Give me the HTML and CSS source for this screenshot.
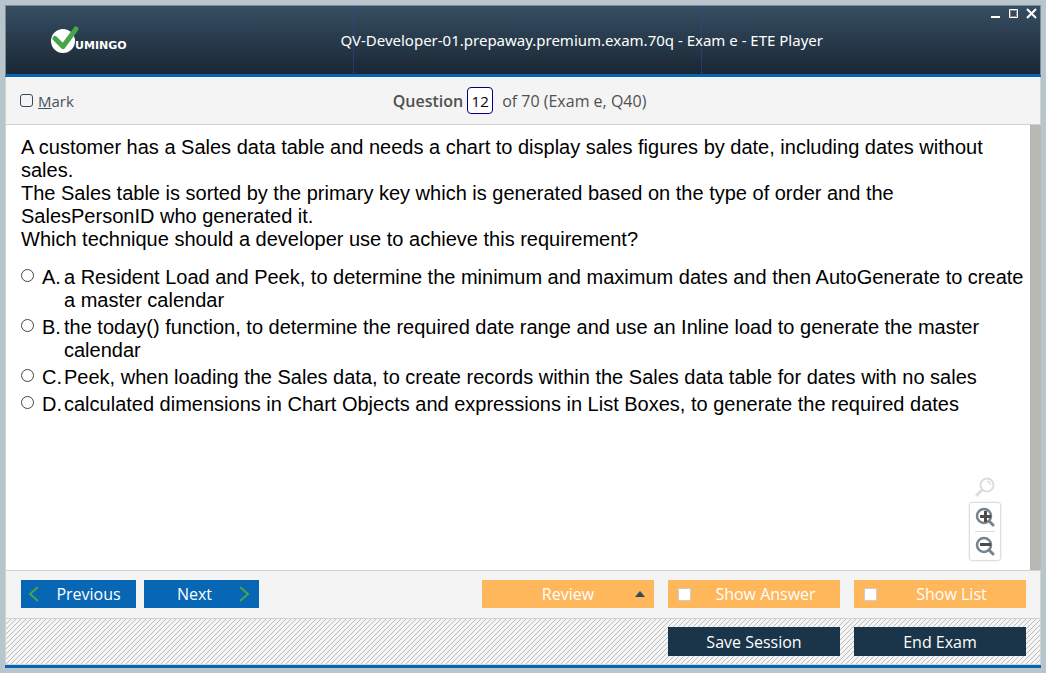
FILE: index.html
```html
<!DOCTYPE html>
<html lang="en">
<head>
<meta charset="utf-8">
<title>ETE Player</title>
<link rel="stylesheet" href="styles.css">
</head>
<body>
<div class="window">
  <header class="titlebar">
    <svg class="logo" width="84" height="28" viewBox="0 0 84 28" role="img" aria-label="Vumingo">
      <circle cx="12" cy="15" r="12" fill="#fff"/>
      <path d="M4 12.500L12 20.500L25 3" fill="none" stroke="#45a548" stroke-width="5" stroke-linecap="round" stroke-linejoin="round"/>
      <text class="logo-text" x="24" y="23">UMINGO</text>
    </svg>
    <h1 class="title">QV-Developer-01.prepaway.premium.exam.70q - Exam e - ETE Player</h1>
    <div class="controls">
      <button class="control" aria-label="Minimize"><svg width="11" height="11" viewBox="0 0 11 11"><path d="M1 8h9v2H1z" fill="#fff"/></svg></button>
      <button class="control" aria-label="Maximize"><svg width="11" height="11" viewBox="0 0 11 11"><path d="M1.500 1.500h8v8h-8z" fill="none" stroke="#fff"/><path d="M2.500 2.500h6v6h-6z" fill="none" stroke="#8d8580"/></svg></button>
      <button class="control" aria-label="Close"><svg width="11" height="11" viewBox="0 0 11 11"><path d="M1 1l9 9M10 1l-9 9" stroke="#fff" stroke-width="2"/></svg></button>
    </div>
  </header>
  <div class="infobar">
    <label class="mark"><input type="checkbox" class="mark-box"><span><u>M</u>ark</span></label>
    <div class="position">
      <label class="position-label" for="number">Question</label>
      <input class="number" id="number" type="text" value="12">
      <span>of 70 (Exam e, Q40)</span>
    </div>
  </div>
  <main class="content">
    <div class="question">
      <p>A customer has a Sales data table and needs a chart to display sales figures by date, including dates without sales.</p>
      <p>The Sales table is sorted by the primary key which is generated based on the type of order and the SalesPersonID who generated it.</p>
      <p>Which technique should a developer use to achieve this requirement?</p>
      <div class="answers">
        <label class="answer"><input type="radio" name="answer"><span>A.</span><span>a Resident Load and Peek, to determine the minimum and maximum dates and then AutoGenerate to create a master calendar</span></label>
        <label class="answer"><input type="radio" name="answer"><span>B.</span><span>the today() function, to determine the required date range and use an Inline load to generate the master calendar</span></label>
        <label class="answer"><input type="radio" name="answer"><span>C.</span><span>Peek, when loading the Sales data, to create records within the Sales data table for dates with no sales</span></label>
        <label class="answer"><input type="radio" name="answer"><span>D.</span><span>calculated dimensions in Chart Objects and expressions in List Boxes, to generate the required dates</span></label>
      </div>
    </div>
    <div class="zoom">
      <svg width="20" height="20" viewBox="0 0 20 20"><circle cx="12" cy="8" r="6.500" fill="none" stroke="#dcdcdc" stroke-width="2"/><path d="M12 4.500a3.500 3.500 0 0 1 3.500 3.500" fill="none" stroke="#dcdcdc" stroke-width="1.500"/><path d="M7 13l-5 5" stroke="#dcdcdc" stroke-width="3" stroke-linecap="round"/></svg>
      <div class="zoom-box">
        <button class="zoom-button" aria-label="Zoom in"><svg width="20" height="20" viewBox="0 0 20 20"><circle cx="9" cy="9" r="7" fill="none" stroke="#76838d" stroke-width="2.500"/><path d="M14 14l4 4" stroke="#76838d" stroke-width="3" stroke-linecap="round"/><path d="M5 9.500h11M10.500 4v11" stroke="#4c4c4c" stroke-width="3"/></svg></button>
        <button class="zoom-button" aria-label="Zoom out"><svg width="20" height="20" viewBox="0 0 20 20"><circle cx="9" cy="9" r="7" fill="none" stroke="#76838d" stroke-width="2.500"/><path d="M14 14l4 4" stroke="#76838d" stroke-width="3" stroke-linecap="round"/><path d="M5 8.500h11" stroke="#4c4c4c" stroke-width="3"/></svg></button>
      </div>
    </div>
  </main>
  <div class="toolbar">
    <button class="button nav"><svg width="12" height="18" viewBox="0 0 12 18"><path d="M10 2L2 9l8 7" fill="none" stroke="#45a548" stroke-width="2"/></svg><span>Previous</span></button>
    <button class="button nav next"><span>Next</span><svg width="12" height="18" viewBox="0 0 12 18"><path d="M2 2l8 7-8 7" fill="none" stroke="#45a548" stroke-width="2"/></svg></button>
    <button class="button wide review"><span>Review</span><svg width="10" height="6" viewBox="0 0 10 6"><path d="M0 6l5-6 5 6z" fill="#34495e"/></svg></button>
    <label class="button wide check"><input type="checkbox"><span>Show Answer</span></label>
    <label class="button wide check"><input type="checkbox"><span>Show List</span></label>
  </div>
  <footer class="footer">
    <button class="button wide dark">Save Session</button>
    <button class="button wide dark">End Exam</button>
  </footer>
</div>
</body>
</html>
```
FILE: styles.css
```css
* { box-sizing: border-box; }
body {
  margin: 0;
  min-height: 100vh;
  padding: 5px;
  display: flex;
  background: #b9c5cc;
  font-family: "Open Sans", "Noto Sans", sans-serif;
  font-size: 16px;
}
h1, p { margin: 0; font-weight: normal; }
button, input { font: inherit; margin: 0; }
button { padding: 0; border: 0; background: none; }
svg { display: block; flex: none; }
.window {
  flex: 1;
  display: flex;
  flex-direction: column;
  border-bottom: 3px solid #0863b0;
}
.titlebar {
  height: 72px;
  display: grid;
  grid-template-columns: 4fr auto 3fr;
  align-items: center;
  padding-left: 45px;
  border: 1px solid #7d8b92;
  border-bottom: 3px solid #0863b0;
  background:
    repeating-linear-gradient(#34469d 0 1px, transparent 1px 2px) 347px 0 / 1px 100% no-repeat,
    repeating-linear-gradient(#34469d 0 1px, transparent 1px 2px) 695px 0 / 1px 100% no-repeat,
    linear-gradient(#364e62, #1a2734);
}
.logo-text {
  fill: #fff;
  font: bold 11px "DejaVu Sans", sans-serif;
}
.title {
  color: #fff;
  font-family: "Noto Sans", "Open Sans", sans-serif;
  font-size: 15px;
}
.controls {
  display: flex;
  align-self: start;
  justify-self: end;
  gap: 7px;
  padding: 2px 3px;
}
.infobar, .toolbar, .footer {
  border: 1px solid #d2d2d2;
  background: #f4f4f4;
}
.infobar {
  height: 48px;
  display: grid;
  grid-template-columns: 1fr auto 1fr;
  align-items: center;
  padding: 0 21px 0 14px;
  border-top: 0;
  color: #505050;
}
.mark { display: flex; align-items: center; gap: 5px; font-size: 15px; color: #44515c; }
.mark-box {
  appearance: none;
  width: 13px;
  height: 13px;
  border: 1px solid #34495e;
  border-radius: 3px;
}
.position { display: flex; align-items: center; }
.position-label { font-weight: 600; }
.number {
  width: 26px;
  height: 27px;
  margin: 0 9px 0 4px;
  padding: 0;
  border: 1px solid #000080;
  border-radius: 4px;
  background: #fff;
  color: #000;
  font-size: 15px;
  text-align: center;
}
.content {
  flex: 1;
  position: relative;
  border-left: 1px solid #d2d2d2;
  border-right: 11px solid #b9b8b4;
  background: #fff;
}
.question {
  padding: 11px 4px 0 15px;
  font: 20px/23px "Liberation Sans", Arial, sans-serif;
}
.answers { display: flex; flex-direction: column; gap: 4px; margin-top: 15px; }
.answer { display: grid; grid-template-columns: 21px 22px 1fr; align-items: start; }
.answer input {
  appearance: none;
  width: 13px;
  height: 13px;
  margin-top: 3px;
  border: 1px solid #444;
  border-radius: 50%;
}
.zoom {
  position: absolute;
  right: 29px;
  bottom: 9px;
  display: flex;
  flex-direction: column;
  align-items: center;
  gap: 5px;
}
.zoom-box {
  padding: 0 5px;
  border: 1px solid #dedede;
  border-radius: 3px;
  box-shadow: 0 0 2px #ddd;
}
.zoom-button { display: block; padding: 4px 0; }
.zoom-button + .zoom-button { border-top: 1px solid #ddd; }
.toolbar {
  height: 49px;
  display: flex;
  align-items: flex-start;
  gap: 14px;
  padding: 9px 14px 0 15px;
}
.button {
  height: 28px;
  display: flex;
  align-items: center;
  justify-content: center;
  color: #fff;
}
.nav { width: 115px; padding: 0 7px; background: #0867b5; }
.nav + .nav { margin-left: -6px; }
.nav span { flex: 1; padding-left: 8px; }
.nav.next { padding-right: 9px; }
.nav.next span { padding-left: 0; }
.wide { width: 172px; background: #ffb75c; }
.review { margin-left: auto; padding: 0 9px 0 19px; }
.review span, .check span { flex: 1; text-align: center; }
.check { padding: 0 0 0 10px; }
.check input {
  appearance: none;
  width: 13px;
  height: 13px;
  border: 1px solid #ccc;
  background: #fff;
}
.footer {
  height: 46px;
  display: flex;
  align-items: center;
  justify-content: flex-end;
  gap: 14px;
  padding: 0 14px;
  border-top: 0;
  background: linear-gradient(135deg, #f4f4f4 46%, #bdbdbd 46% 54%, #f4f4f4 54%) 0 0 / 5px 5px;
}
.footer .dark { height: 29px; background: #1a344a; }
```
